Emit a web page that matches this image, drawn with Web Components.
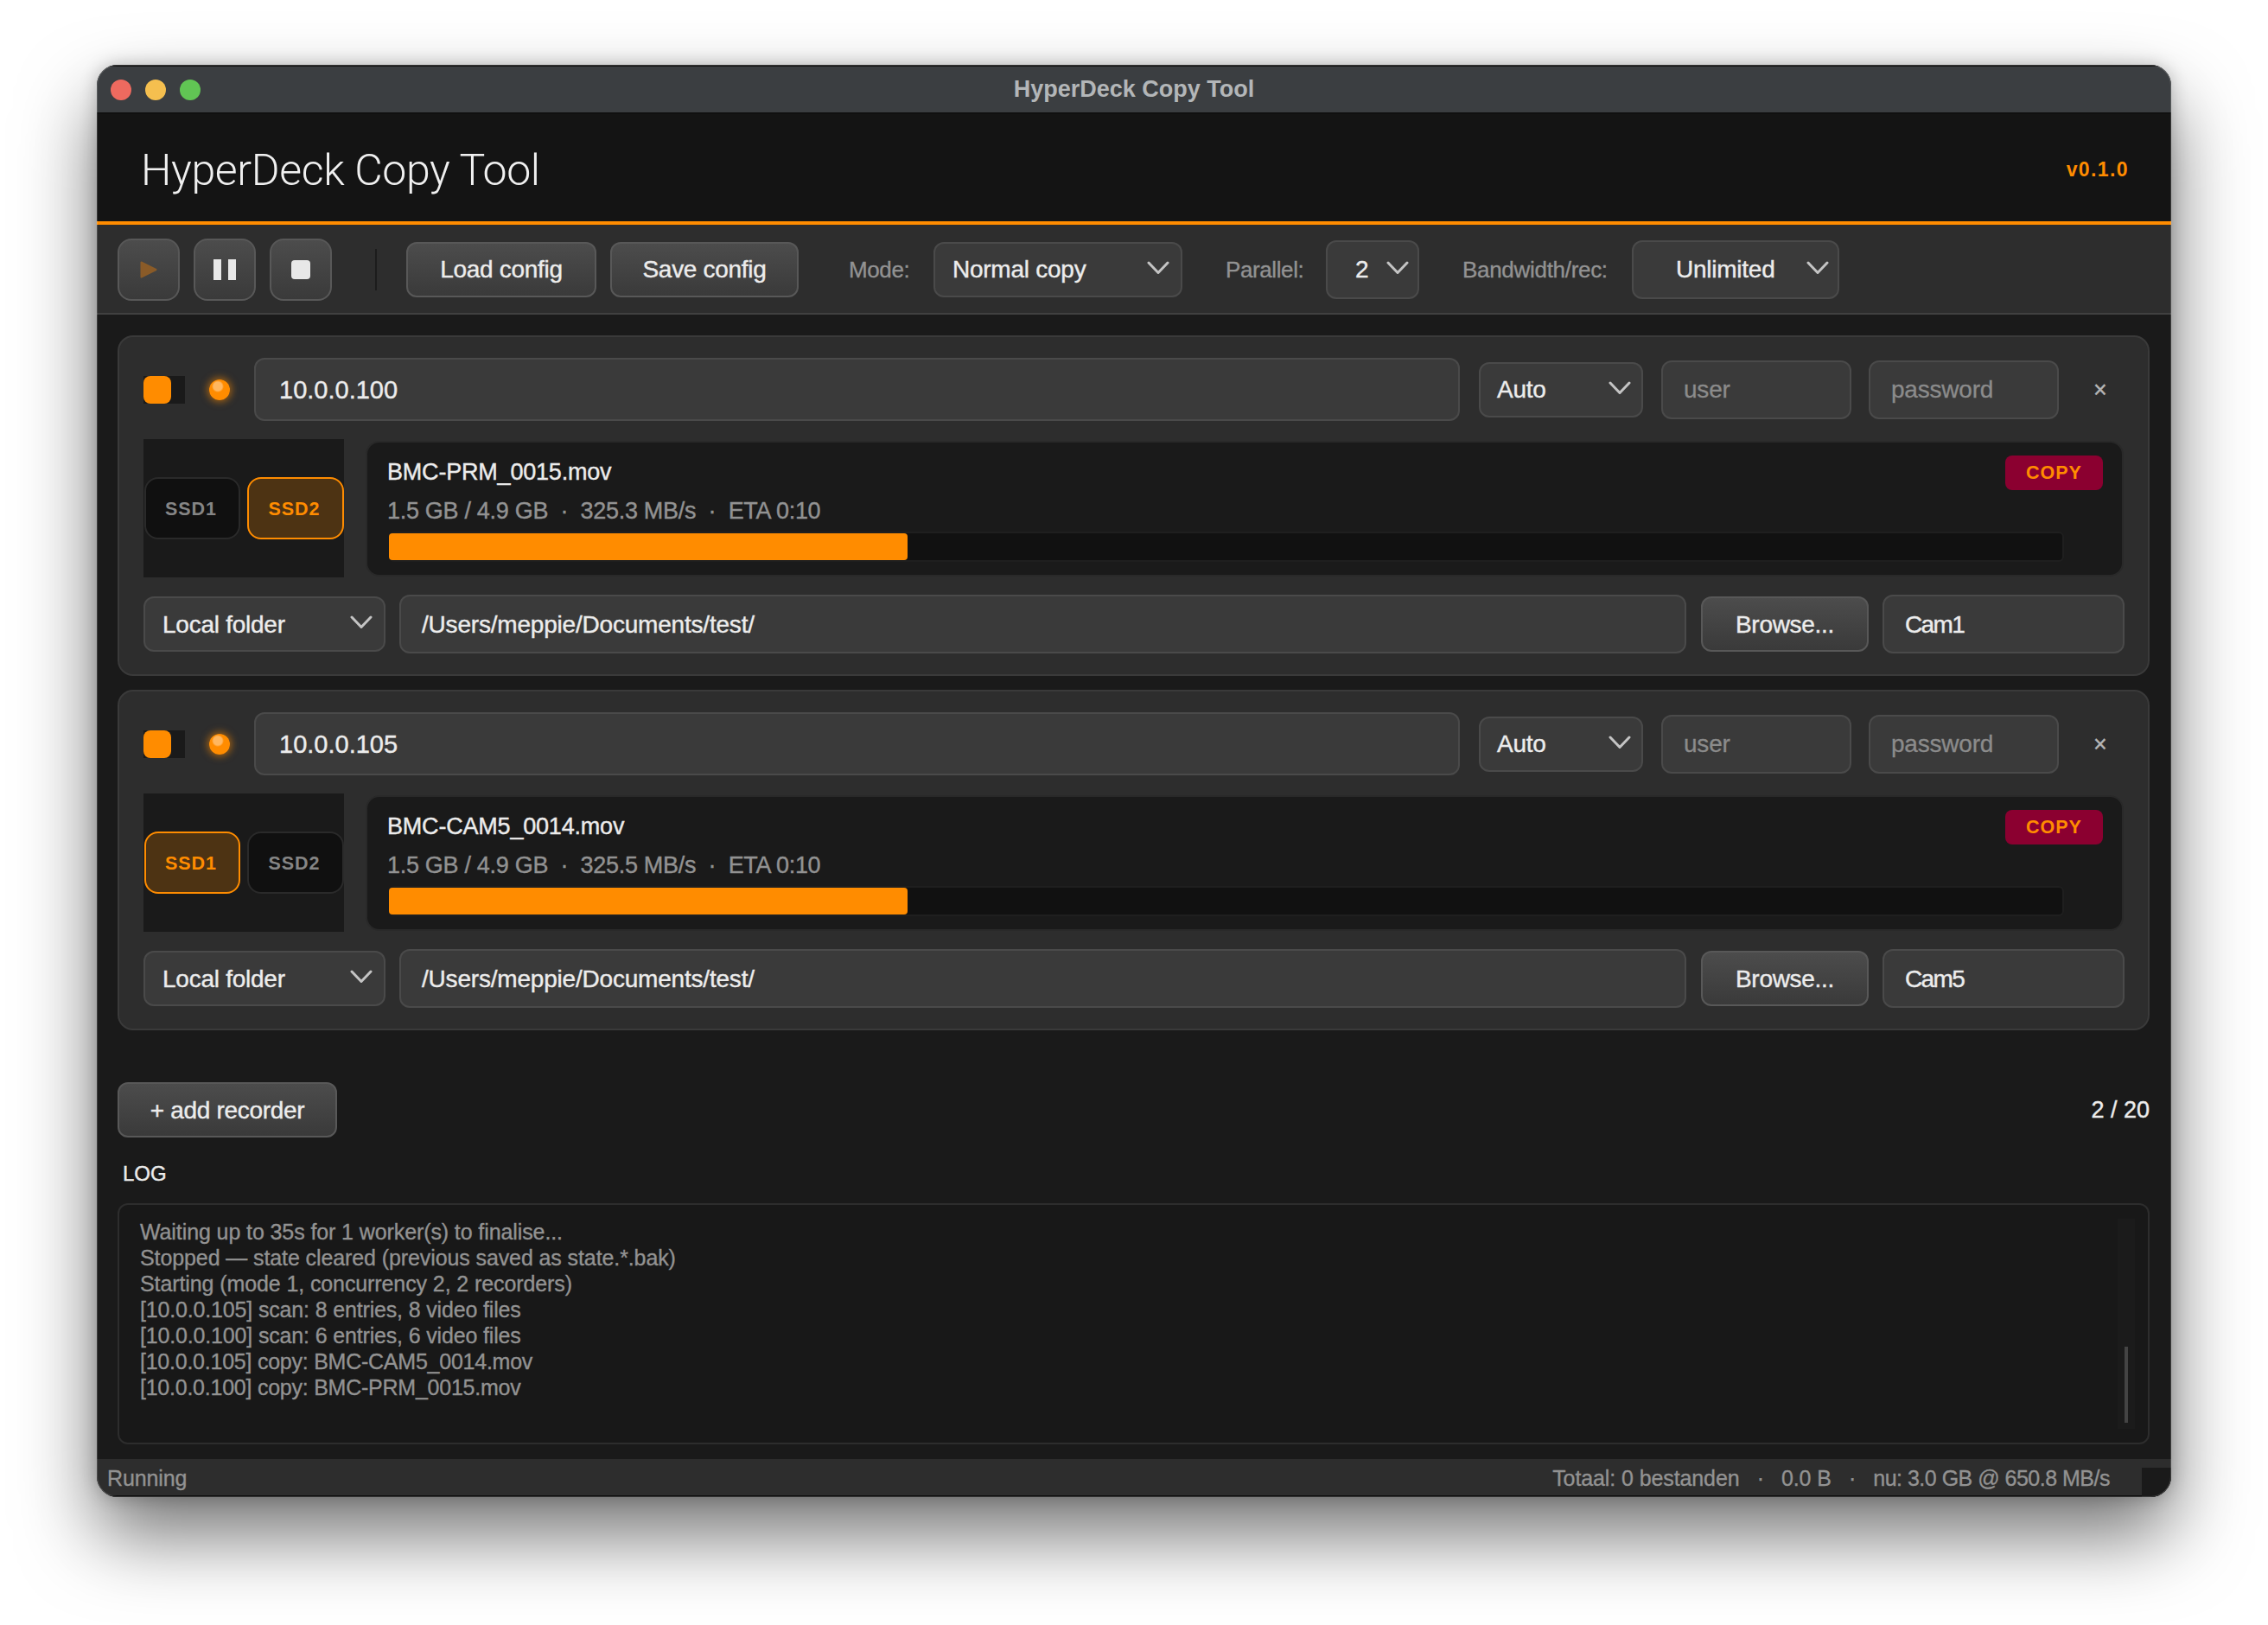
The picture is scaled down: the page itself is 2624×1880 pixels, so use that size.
<!DOCTYPE html>
<html lang="en">
<head>
<meta charset="utf-8">
<title>HyperDeck Copy Tool</title>
<style>
html,body{margin:0;padding:0;background:#fff;overflow:hidden;height:100%}
body{padding:75px 0 0 112px;box-sizing:border-box;font-family:"Liberation Sans",Arial,sans-serif;-webkit-font-smoothing:antialiased}
</style>
</head>
<body>
<template id="t-window">
<style>
:host{display:flex;flex-direction:column;position:relative;width:2400px;height:1657px;border-radius:24px;background:#1a1a1a;box-shadow:0 44px 88px rgba(0,0,0,.55),0 0 20px rgba(0,0,0,.22);font-family:"Liberation Sans",Arial,sans-serif}
.clip{display:flex;flex-direction:column;flex:1;min-height:0;border-radius:24px;overflow:hidden}
.edge{position:absolute;inset:0;border-radius:24px;border:1px solid rgba(255,255,255,.16);pointer-events:none}
main{flex:1;min-height:0;display:flex;flex-direction:column;padding:24px 25px 17px 24px}
</style>
<div class="clip"><slot name="chrome"></slot><main><slot></slot></main><slot name="status"></slot></div><div class="edge"></div>
</template>

<template id="t-titlebar">
<style>
:host{display:grid;grid-template-columns:1fr auto 1fr;align-items:center;height:57px;box-sizing:border-box;background:#3b3e41;border-top:2px solid #121212;border-bottom:2px solid #101010;color:#b3b6b8;font-size:27px;font-weight:700}
.dots{display:flex;gap:16px;padding-left:16px}
i{display:block;width:24px;height:24px;border-radius:50%}
</style>
<div class="dots"><i style="background:#ee6a5f"></i><i style="background:#f5bf4f"></i><i style="background:#61c554"></i></div>
<div><slot></slot></div><div></div>
</template>

<template id="t-header">
<style>
:host{display:flex;align-items:center;justify-content:space-between;height:128px;box-sizing:border-box;background:#141414;border-bottom:4px solid #ff8c00;padding:5px 49px 0 51px}
.title{font-family:Roboto,"Liberation Sans",sans-serif;font-size:50px;font-weight:300;color:#f0f0f0;letter-spacing:-.35px}
.ver{font-size:23px;font-weight:700;color:#ff8c00;letter-spacing:1.4px}
</style>
<div class="title"><slot></slot></div><div class="ver"><slot name="version"></slot></div>
</template>

<template id="t-toolbar">
<style>
:host{display:flex;align-items:center;height:104px;box-sizing:border-box;background:#2d2d2d;border-bottom:2px solid #404040;padding:1px 0 0 24px;color:#e8e8e8}
</style>
<slot></slot>
</template>

<template id="t-iconbtn">
<style>
:host{display:flex;align-items:center;justify-content:center;width:72px;height:72px;box-sizing:border-box;border-radius:16px;border:2px solid #585858;background:linear-gradient(#4c4c4c,#3a3a3a);margin-right:16px}
svg{display:block}
</style>
<slot></slot>
</template>

<template id="t-btn">
<style>
:host{display:flex;align-items:center;justify-content:center;height:64px;box-sizing:border-box;padding-top:1px;border-radius:12px;border:2px solid #585858;background:linear-gradient(#4c4c4c,#3a3a3a);color:#ececec;font-size:28px;letter-spacing:-.3px;-webkit-text-stroke:.4px currentColor;white-space:nowrap;flex:none}
</style>
<slot></slot>
</template>

<template id="t-select">
<style>
:host{display:flex;align-items:center;justify-content:space-between;width:var(--w);height:var(--h,64px);box-sizing:border-box;padding:1px var(--cr,15px) 0 var(--pl,20px);border-radius:12px;border:2px solid #4a4a4a;background:#3a3a3a;color:#ececec;font-size:28px;letter-spacing:-.25px;-webkit-text-stroke:.4px currentColor;white-space:nowrap;flex:none}
svg{display:block;margin-top:-5px;flex:none}
</style>
<span><slot></slot></span>
<svg width="26" height="16" viewBox="0 0 26 16" fill="none"><path d="M2 2L13 13.5L24 2" stroke="#c4c4c4" stroke-width="3" stroke-linecap="round" stroke-linejoin="round"/></svg>
</template>

<template id="t-input">
<style>
:host{display:flex;align-items:center;height:var(--h,68px);box-sizing:border-box;padding:1px 0 0 var(--pl,24px);border-radius:12px;border:2px solid #4a4a4a;background:#3a3a3a;color:#ececec;font-size:var(--fs,28px);letter-spacing:var(--ls,-.2px);-webkit-text-stroke:.4px currentColor;white-space:nowrap;min-width:0}
:host([placeholder]){color:#8b8b8b;-webkit-text-stroke:.3px currentColor}
</style>
<slot></slot>
</template>

<template id="t-ssd">
<style>
:host{display:flex;align-items:center;justify-content:center;height:72px;box-sizing:border-box;padding:2px 3px 0 0;border-radius:16px;border:2px solid #2a2a2a;background:#101010;color:#858585;font-size:21.5px;font-weight:700;letter-spacing:1px}
:host([active]){background:#4d3313;border-color:#ff8c00;color:#ff8c00}
</style>
<slot></slot>
</template>

<template id="t-led">
<style>
:host{display:block;width:24px;height:24px;flex:none;border-radius:50%;background:radial-gradient(circle 7px at 10px 8px,#ffb760 0 5px,#ff8c00 7px);box-shadow:0 0 8px 2px rgba(255,140,0,.55)}
</style>
</template>

<template id="t-toggle">
<style>
:host{display:block;width:48px;height:32px;flex:none;background:#1a1a1a}
div{width:32px;height:32px;border-radius:8px;background:#ff8c00}
</style>
<div></div>
</template>

<template id="t-copy">
<style>
:host{display:flex;flex-direction:column;flex:1;min-width:0;height:157px;box-sizing:border-box;margin:0 1px 0 25px;padding:15px 22px 15px 23px;background:#1a1a1a;border:2px solid #292929;border-radius:16px}
.top{display:flex;align-items:center;justify-content:space-between;height:40px;color:#ececec;font-size:27px;letter-spacing:-.2px;-webkit-text-stroke:.4px currentColor}
.badge{display:flex;align-items:center;justify-content:center;box-sizing:border-box;width:113px;height:40px;padding-top:1px;border-radius:8px;background:#8b0030;color:#ff8c00;font-size:21.5px;font-weight:700;letter-spacing:1px;-webkit-text-stroke:0}
.stats{height:32px;line-height:32px;margin-top:8px;color:#929292;font-size:27px;letter-spacing:-.3px;white-space:pre;-webkit-text-stroke:.4px currentColor}
.bar{height:35px;box-sizing:border-box;margin:8px 45px 0 2px;background:#111;border:solid #1f1f1f;border-width:2px 2px 2px 0;border-radius:6px}
.fill{height:100%;background:#ff8c00;border-radius:4px;width:var(--p)}
</style>
<div class="top"><span><slot></slot></span><span class="badge"><slot name="badge"></slot></span></div>
<div class="stats"><slot name="stats"></slot></div>
<div class="bar"><div class="fill"></div></div>
</template>

<template id="t-card">
<style>
:host{display:flex;flex-direction:column;height:394px;box-sizing:border-box;margin-bottom:16px;padding:24px 27px 24px 28px;background:#2d2d2d;border:2px solid #3a3a3a;border-radius:18px}
.r1{display:flex;align-items:center;height:73px}
.r2{display:flex;align-items:center;height:160px;margin-top:21px}
.r3{display:flex;align-items:center;height:68px;margin-top:20px}
.ssds{display:grid;grid-template-columns:111px 112px;column-gap:8px;align-items:center;align-content:center;width:232px;height:160px;box-sizing:border-box;padding-left:1px;background:#1a1a1a;flex:none}
.close{width:54px;margin:0 1px 0 21px;padding-top:1px;flex:none;text-align:center;color:#b5b5b5;font-size:27px;-webkit-text-stroke:.4px currentColor}
</style>
<div class="r1">
<hd-toggle></hd-toggle>
<hd-led style="margin-left:28px"></hd-led>
<hd-input style="--h:73px;--pl:27px;--fs:29px;--ls:0px;flex:1;margin-left:28px" id="ip"></hd-input>
<hd-select style="--w:190px;--pl:19px;--cr:12px;margin-left:22px">Auto</hd-select>
<hd-input placeholder style="width:220px;flex:none;margin-left:21px">user</hd-input>
<hd-input placeholder style="width:220px;flex:none;margin-left:20px">password</hd-input>
<div class="close">×</div>
</div>
<div class="r2">
<div class="ssds"><hd-ssd id="s1">SSD1</hd-ssd><hd-ssd id="s2">SSD2</hd-ssd></div>
<hd-copy id="copy"><span id="file"></span><span slot="badge">COPY</span><span slot="stats" id="stats"></span></hd-copy>
</div>
<div class="r3">
<hd-select style="--w:280px;--pl:20px;--cr:13px">Local folder</hd-select>
<hd-input style="flex:1;margin-left:16px">/Users/meppie/Documents/test/</hd-input>
<hd-btn style="width:194px;margin-left:17px">Browse...</hd-btn>
<hd-input id="name" style="--ls:-1.6px;width:280px;flex:none;margin-left:16px"></hd-input>
</div>
</template>

<template id="t-log">
<style>
:host{display:flex;flex:1;min-height:0;box-sizing:border-box;margin-top:18px;background:#181818;border:2px solid #2d2d2d;border-radius:12px;color:#929292;font-size:25px;letter-spacing:-.1px;line-height:30px;-webkit-text-stroke:.35px currentColor}
.text{flex:1;padding:16px 0 0 24px;white-space:pre-line}
.track{width:20px;margin:16px 15px 16px 0;padding-left:8px;box-sizing:border-box;background:#1b1b1b}
.thumb{width:4px;height:88px;margin-top:148px;background:#444}
</style>
<div class="text"><slot></slot></div>
<div class="track"><div class="thumb"></div></div>
</template>

<template id="t-status">
<style>
:host{display:flex;height:44px;box-sizing:border-box;background:#2d2d2d;border-bottom:2px solid #0c0c0c;color:#929292;font-size:25px;letter-spacing:-.1px;-webkit-text-stroke:.35px currentColor;white-space:pre;padding-left:12px}
.l{flex:1;line-height:44px}
.r{line-height:44px}
.grip{width:34px;height:34px;margin:-2px 0 0 37px;align-self:flex-end;background:#1a1a1a;margin-bottom:-2px}
</style>
<div class="l"><slot></slot></div><div class="r"><slot name="right"></slot></div><div class="grip"></div>
</template>

<hd-window>
  <hd-titlebar slot="chrome">HyperDeck Copy Tool</hd-titlebar>
  <hd-header slot="chrome">HyperDeck Copy Tool<span slot="version">v0.1.0</span></hd-header>
  <hd-toolbar slot="chrome">
    <hd-iconbtn><svg width="20" height="20" viewBox="0 0 20 20"><path d="M1.5 1.5L18.5 10L1.5 18.5Z" fill="#8a5b28" stroke="#8a5b28" stroke-width="2" stroke-linejoin="round"/></svg></hd-iconbtn>
    <hd-iconbtn><svg width="26" height="24" viewBox="0 0 26 24"><rect x="0" width="9" height="24" fill="#e8e8e8"/><rect x="17" width="9" height="24" fill="#e8e8e8"/></svg></hd-iconbtn>
    <hd-iconbtn style="margin-right:0"><svg width="22" height="22" viewBox="0 0 22 22"><rect width="22" height="22" rx="4" fill="#e8e8e8"/></svg></hd-iconbtn>
    <hd-sep></hd-sep>
    <hd-btn style="width:220px">Load config</hd-btn>
    <hd-btn style="width:218px;margin-left:16px">Save config</hd-btn>
    <hd-label style="--lw:70px;margin-left:58px">Mode:</hd-label>
    <hd-select style="--w:288px;--pl:20px;--cr:13px;margin-left:28px">Normal copy</hd-select>
    <hd-label style="--lw:89px;margin-left:50px">Parallel:</hd-label>
    <hd-select style="--w:108px;--h:68px;--pl:32px;--cr:10px;margin-left:27px">2</hd-select>
    <hd-label style="--lw:167px;margin-left:50px;letter-spacing:-.3px">Bandwidth/rec:</hd-label>
    <hd-select style="--w:240px;--h:68px;--pl:49px;--cr:10px;margin-left:29px">Unlimited</hd-select>
  </hd-toolbar>

  <hd-card ip="10.0.0.100" file="BMC-PRM_0015.mov" speed="325.3" active="2" name="Cam1"></hd-card>
  <hd-card ip="10.0.0.105" file="BMC-CAM5_0014.mov" speed="325.5" active="1" name="Cam5"></hd-card>

  <hd-addrow><hd-btn style="width:254px">+ add recorder</hd-btn><span slot="count">2 / 20</span></hd-addrow>
  <hd-loglabel>LOG</hd-loglabel>
  <hd-log>Waiting up to 35s for 1 worker(s) to finalise...
Stopped — state cleared (previous saved as state.*.bak)
Starting (mode 1, concurrency 2, 2 recorders)
<span style="letter-spacing:-.16px">[10.0.0.105] scan: 8 entries, 8 video files
[10.0.0.100] scan: 6 entries, 6 video files</span>
<span style="letter-spacing:-.24px">[10.0.0.105] copy: BMC-CAM5_0014.mov
[10.0.0.100] copy: BMC-PRM_0015.mov</span></hd-log>

  <hd-status slot="status">Running<span slot="right">Totaal: 0 bestanden  <span style="letter-spacing:-.4px"> · </span>  0.0 B  <span style="letter-spacing:-.4px"> · </span>  <span style="letter-spacing:-.5px">nu: 3.0 GB @ 650.8 MB/s</span></span></hd-status>
</hd-window>

<script>
function simple(tag, tplId, css, html){
  customElements.define(tag, class extends HTMLElement{
    constructor(){
      super();
      const root=this.attachShadow({mode:'open'});
      if(tplId){root.appendChild(document.getElementById(tplId).content.cloneNode(true));}
      else{root.innerHTML='<style>'+css+'</style>'+(html===undefined?'<slot></slot>':html);}
    }
  });
}
simple('hd-window','t-window');
simple('hd-titlebar','t-titlebar');
simple('hd-header','t-header');
simple('hd-toolbar','t-toolbar');
simple('hd-iconbtn','t-iconbtn');
simple('hd-btn','t-btn');
simple('hd-select','t-select');
simple('hd-input','t-input');
simple('hd-ssd','t-ssd');
simple('hd-led','t-led');
simple('hd-toggle','t-toggle');
simple('hd-copy','t-copy');
simple('hd-log','t-log');
simple('hd-status','t-status');
simple('hd-sep',null,':host{display:block;width:2px;height:48px;background:#1c1c1c;margin:0 34px 0 50px;flex:none}','');
simple('hd-label',null,':host{display:block;width:var(--lw);flex:none;white-space:nowrap;padding-top:1px;color:#929292;font-size:26px;letter-spacing:-.4px;-webkit-text-stroke:.35px currentColor}');
simple('hd-addrow',null,':host{display:flex;align-items:center;justify-content:space-between;margin-top:44px;height:64px;color:#ececec;font-size:27px;-webkit-text-stroke:.4px currentColor}span{display:block;padding-top:1px}','<slot></slot><span><slot name="count"></slot></span>');
simple('hd-loglabel',null,':host{display:block;height:32px;line-height:32px;margin:26px 0 0 6px;color:#ececec;font-size:24px;-webkit-text-stroke:.4px currentColor}');

customElements.define('hd-card', class extends HTMLElement{
  constructor(){
    super();
    const root=this.attachShadow({mode:'open'});
    root.appendChild(document.getElementById('t-card').content.cloneNode(true));
    const a=n=>this.getAttribute(n);
    const q=s=>root.querySelector(s);
    q('#ip').textContent=a('ip');
    q('#file').textContent=a('file');
    q('#stats').textContent='1.5 GB / 4.9 GB  ·  '+a('speed')+' MB/s  ·  ETA 0:10';
    q('#name').textContent=a('name');
    q(a('active')==='1'?'#s1':'#s2').setAttribute('active','');
    q('#copy').style.setProperty('--p','600px');
  }
});
</script>
</body>
</html>
